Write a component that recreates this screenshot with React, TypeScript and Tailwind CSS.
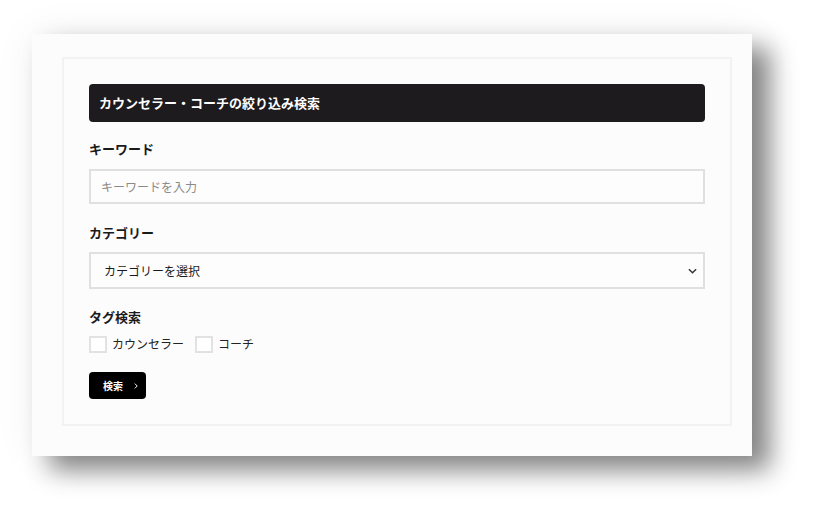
import { useState } from "react";

const font = { fontFamily: '"Noto Sans CJK JP", "Noto Sans", sans-serif' };

function Chevron({ className }: { className?: string }) {
  return (
    <svg viewBox="0 0 10 6" className={className} fill="none" stroke="currentColor" strokeWidth={1.6}>
      <path d="M1 1l4 4 4-4" />
    </svg>
  );
}

function Check({ label, checked, onChange }: { label: string; checked: boolean; onChange: () => void }) {
  return (
    <label className="flex items-center gap-[5px] cursor-pointer">
      <span
        onClick={onChange}
        className={`w-[18px] h-[17px] border-2 border-[#e2e2e2] bg-white ${checked ? "bg-black border-black" : ""}`}
      />
      <span className="text-[12px] leading-[20px] text-[#222]">{label}</span>
    </label>
  );
}

export default function App() {
  const [tags, setTags] = useState({ counselor: false, coach: false });

  return (
    <div className="w-[818px] h-[520px] bg-white overflow-hidden pl-[32px] pt-[34px]" style={font}>
      <div className="w-[720px] bg-[#fcfcfd] pl-[30px] pr-[20px] pt-[23px] pb-[30px] shadow-[18px_14px_24px_rgba(0,0,0,0.47),0_0_40px_rgba(0,0,0,0.06)]">
        <div className="border-2 border-[#f3f2f3] bg-[#fdfcfd] px-[25px] pt-[25px] pb-[25px]">
          <div className="h-[38px] rounded-[4px] bg-[#1d1b1e] flex items-center pl-[10px]">
            <h2 className="text-[13px] font-bold text-white">カウンセラー・コーチの絞り込み検索</h2>
          </div>

          <div className="mt-[17px] h-[20px] leading-[20px] text-[13px] font-bold text-[#1a1a1a]">キーワード</div>
          <input
            type="text"
            placeholder="キーワードを入力"
            className="mt-[10px] block w-full h-[35px] border-2 border-[#e0e0e0] bg-[#fdfdfd] pl-[10px] text-[12px] text-[#222] placeholder:text-[#8a8a8a] outline-none"
          />

          <div className="mt-[19px] h-[20px] leading-[20px] text-[13px] font-bold text-[#1a1a1a]">カテゴリー</div>
          <div className="mt-[9px] h-[37px] border-2 border-[#e0e0e0] bg-[#fdfdfd] flex items-center justify-between pl-[13px] pr-[6px]">
            <span className="text-[12px] text-[#1a1a1a]">カテゴリーを選択</span>
            <Chevron className="w-[9px] h-[6px] text-[#333]" />
          </div>

          <div className="mt-[18px] h-[20px] leading-[20px] text-[13px] font-bold text-[#1a1a1a]">タグ検索</div>
          <div className="mt-[7px] flex items-center gap-[11px]">
            <Check
              label="カウンセラー"
              checked={tags.counselor}
              onChange={() => setTags({ ...tags, counselor: !tags.counselor })}
            />
            <Check label="コーチ" checked={tags.coach} onChange={() => setTags({ ...tags, coach: !tags.coach })} />
          </div>

          <button
            type="button"
            className="mt-[18px] w-[57px] h-[27px] rounded-[4px] bg-black text-white flex items-center pl-[14px] gap-[10px]"
          >
            <span className="text-[10px] font-bold">検索</span>
            <Chevron className="w-[6px] h-[4px] -rotate-90 text-white" />
          </button>
        </div>
      </div>
    </div>
  );
}
